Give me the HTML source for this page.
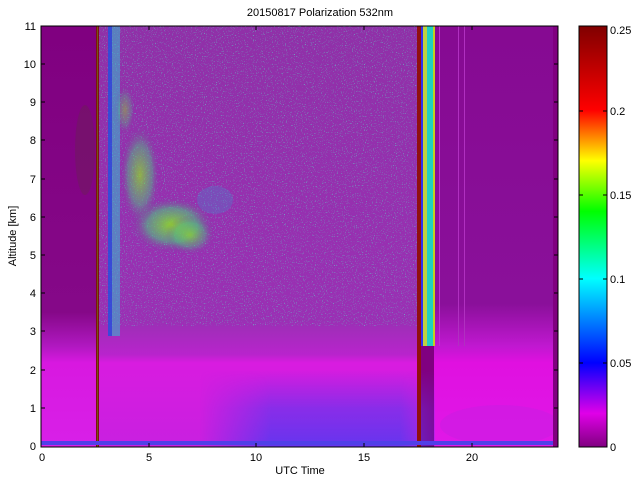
<!DOCTYPE html>
<html><head><style>
body{margin:0;background:#fff;width:640px;height:480px;overflow:hidden;font-family:"Liberation Sans",sans-serif;}
</style></head><body>
<svg width="640" height="480" xmlns="http://www.w3.org/2000/svg" font-family="Liberation Sans, sans-serif" font-size="11">
<defs>
<clipPath id="pa"><rect x="41" y="26" width="517" height="421"/></clipPath>
<linearGradient id="cb" x1="0" y1="1" x2="0" y2="0">
<stop offset="0" stop-color="#800080"/>
<stop offset="0.08" stop-color="#e000e8"/>
<stop offset="0.2" stop-color="#0000ff"/>
<stop offset="0.4" stop-color="#00ffff"/>
<stop offset="0.56" stop-color="#00ff00"/>
<stop offset="0.68" stop-color="#ffff00"/>
<stop offset="0.8" stop-color="#ff0000"/>
<stop offset="1" stop-color="#800000"/>
</linearGradient>
<linearGradient id="mid" x1="0" y1="0" x2="0" y2="1">
<stop offset="0" stop-color="#9030a8"/>
<stop offset="0.7" stop-color="#9a30b4"/>
<stop offset="0.78" stop-color="#b824cc"/>
<stop offset="0.8" stop-color="#d81ce0"/>
<stop offset="1" stop-color="#c820e0"/>
</linearGradient>
<linearGradient id="right" x1="0" y1="0" x2="0" y2="1">
<stop offset="0" stop-color="#860a92"/>
<stop offset="0.66" stop-color="#8a109a"/>
<stop offset="0.76" stop-color="#c018d0"/>
<stop offset="0.8" stop-color="#e010e0"/>
<stop offset="1" stop-color="#e018e8"/>
</linearGradient>
<linearGradient id="left" x1="0" y1="0" x2="0" y2="1">
<stop offset="0" stop-color="#800080"/>
<stop offset="0.68" stop-color="#850888"/>
<stop offset="0.76" stop-color="#b018c0"/>
<stop offset="0.8" stop-color="#d818e0"/>
<stop offset="1" stop-color="#d820e8"/>
</linearGradient>
<linearGradient id="blueV" x1="0" y1="0" x2="0" y2="1">
<stop offset="0" stop-color="#7030e8" stop-opacity="0"/>
<stop offset="0.5" stop-color="#6a34ec" stop-opacity="0.7"/>
<stop offset="1" stop-color="#5a38f0" stop-opacity="0.9"/>
</linearGradient>
<linearGradient id="blueH" x1="0" y1="0" x2="1" y2="0">
<stop offset="0" stop-color="#fff" stop-opacity="0"/>
<stop offset="0.3" stop-color="#fff" stop-opacity="1"/>
<stop offset="0.85" stop-color="#fff" stop-opacity="1"/>
<stop offset="1" stop-color="#fff" stop-opacity="0.3"/>
</linearGradient>
<mask id="bm"><rect x="200" y="370" width="235" height="77" fill="url(#blueH)"/></mask>
<radialGradient id="cloud" cx="0.5" cy="0.5" r="0.5">
<stop offset="0" stop-color="#90e020" stop-opacity="0.9"/>
<stop offset="0.6" stop-color="#50c080" stop-opacity="0.6"/>
<stop offset="1" stop-color="#8030a0" stop-opacity="0"/>
</radialGradient>
<filter id="nz" x="0" y="0" width="100%" height="100%">
<feTurbulence type="fractalNoise" baseFrequency="0.9" numOctaves="1" seed="3"/>
<feColorMatrix type="matrix" values="0 0 0 0 0.1  0 0 0 0 0.8  0 0 0 0 0.6  0 0 0 9 -5.6"/>
</filter>
</defs>
<text x="320" y="16" text-anchor="middle" font-size="11">20150817 Polarization 532nm</text>
<g clip-path="url(#pa)">
<rect x="41" y="26" width="517" height="421" fill="#800080"/>
<rect x="41" y="26" width="57" height="421" fill="url(#left)"/>
<rect x="98" y="26" width="322" height="421" fill="url(#mid)"/>
<rect x="434" y="26" width="120" height="421" fill="url(#right)"/>
<rect x="98" y="26" width="322" height="300" filter="url(#nz)" opacity="0.6"/>
<rect x="200" y="370" width="235" height="77" fill="url(#blueV)" mask="url(#bm)"/>
<ellipse cx="500" cy="425" rx="60" ry="20" fill="#c020e0" opacity="0.4"/>
<rect x="108" y="26" width="4" height="310" fill="#2050e0" opacity="0.8"/>
<rect x="112" y="26" width="8" height="310" fill="#30c0d0" opacity="0.55"/>
<ellipse cx="172" cy="225" rx="42" ry="28" fill="url(#cloud)"/>
<ellipse cx="190" cy="235" rx="25" ry="20" fill="url(#cloud)" opacity="0.7"/>
<ellipse cx="140" cy="175" rx="20" ry="50" fill="url(#cloud)" opacity="0.8"/>
<ellipse cx="125" cy="110" rx="10" ry="25" fill="url(#cloud)" opacity="0.5"/>
<ellipse cx="215" cy="200" rx="18" ry="14" fill="#4090d0" opacity="0.3"/>
<ellipse cx="85" cy="150" rx="10" ry="45" fill="#603040" opacity="0.3"/>
<rect x="96" y="26" width="3" height="421" fill="#801010"/>
<rect x="97" y="26" width="1" height="421" fill="#60a020" opacity="0.5"/>
<rect x="417" y="26" width="4" height="421" fill="#901010"/>
<rect x="421" y="26" width="2" height="320" fill="#3030f0"/>
<rect x="423" y="26" width="4" height="320" fill="#c0d040"/>
<rect x="427" y="26" width="6" height="320" fill="#20d0c0"/>
<rect x="433" y="26" width="2" height="320" fill="#c0d020"/>
<rect x="439" y="26" width="1" height="320" fill="#c030d0"/>
<rect x="458" y="26" width="1" height="320" fill="#b030c0"/>
<rect x="464" y="26" width="1" height="320" fill="#b030c0"/>
<rect x="41" y="441" width="512" height="4" fill="#5040e8"/>
<rect x="553" y="26" width="5" height="421" fill="#800080"/>
</g>
<rect x="41" y="26" width="517" height="421" fill="none" stroke="#000" stroke-width="1"/>
<g font-size="11" text-anchor="end">
<text x="36" y="450">0</text><text x="36" y="412">1</text><text x="36" y="374">2</text>
<text x="36" y="335">3</text><text x="36" y="297">4</text><text x="36" y="259">5</text>
<text x="36" y="221">6</text><text x="36" y="183">7</text><text x="36" y="144">8</text>
<text x="36" y="106">9</text><text x="36" y="68">10</text><text x="36" y="30">11</text>
</g>
<g stroke="#000">
<line x1="41" y1="408" x2="45" y2="408"/><line x1="41" y1="370" x2="45" y2="370"/>
<line x1="41" y1="331" x2="45" y2="331"/><line x1="41" y1="293" x2="45" y2="293"/>
<line x1="41" y1="255" x2="45" y2="255"/><line x1="41" y1="217" x2="45" y2="217"/>
<line x1="41" y1="179" x2="45" y2="179"/><line x1="41" y1="140" x2="45" y2="140"/>
<line x1="41" y1="102" x2="45" y2="102"/><line x1="41" y1="64" x2="45" y2="64"/>
<line x1="554" y1="408" x2="558" y2="408"/><line x1="554" y1="370" x2="558" y2="370"/>
<line x1="554" y1="331" x2="558" y2="331"/><line x1="554" y1="293" x2="558" y2="293"/>
<line x1="554" y1="255" x2="558" y2="255"/><line x1="554" y1="217" x2="558" y2="217"/>
<line x1="554" y1="179" x2="558" y2="179"/><line x1="554" y1="140" x2="558" y2="140"/>
<line x1="554" y1="102" x2="558" y2="102"/><line x1="554" y1="64" x2="558" y2="64"/>
<line x1="149" y1="443" x2="149" y2="447"/><line x1="256" y1="443" x2="256" y2="447"/>
<line x1="364" y1="443" x2="364" y2="447"/><line x1="472" y1="443" x2="472" y2="447"/>
<line x1="149" y1="26" x2="149" y2="30"/><line x1="256" y1="26" x2="256" y2="30"/>
<line x1="364" y1="26" x2="364" y2="30"/><line x1="472" y1="26" x2="472" y2="30"/>
</g>
<g text-anchor="middle" font-size="11">
<text x="42" y="461">0</text><text x="149" y="461">5</text><text x="256" y="461">10</text>
<text x="364" y="461">15</text><text x="472" y="461">20</text>
</g>
<text x="300" y="474" text-anchor="middle" font-size="11">UTC Time</text>
<text transform="translate(16,236) rotate(-90)" text-anchor="middle" font-size="11">Altitude [km]</text>
<rect x="579" y="26" width="28" height="421" fill="url(#cb)" stroke="#000" stroke-width="1"/>
<g stroke="#000">
<line x1="603" y1="111" x2="607" y2="111"/><line x1="603" y1="195" x2="607" y2="195"/>
<line x1="603" y1="279" x2="607" y2="279"/><line x1="603" y1="363" x2="607" y2="363"/>
<line x1="579" y1="111" x2="583" y2="111"/><line x1="579" y1="195" x2="583" y2="195"/>
<line x1="579" y1="279" x2="583" y2="279"/><line x1="579" y1="363" x2="583" y2="363"/>
</g>
<g font-size="11">
<text x="610" y="34">0.25</text><text x="610" y="115">0.2</text><text x="610" y="199">0.15</text>
<text x="610" y="283">0.1</text><text x="610" y="367">0.05</text><text x="610" y="451">0</text>
</g>
</svg>
</body></html>
